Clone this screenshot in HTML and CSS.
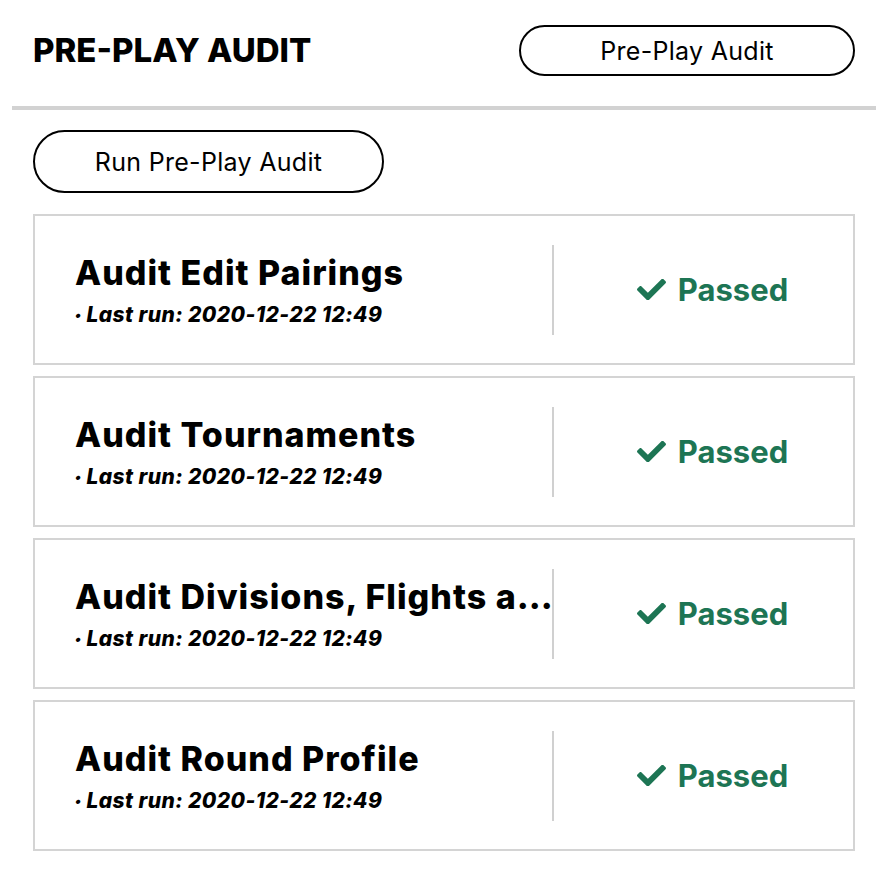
FILE: index.html
```html
<!DOCTYPE html>
<html>
<head>
<meta charset="utf-8">
<link rel="stylesheet" href="styles.css">
</head>
<body>
<div class="page">
  <header class="header">
    <h1 class="title">PRE-PLAY AUDIT</h1>
    <button class="pill pill-header">Pre-Play Audit</button>
  </header>
  <div class="content">
    <button class="pill pill-run">Run Pre-Play Audit</button>
    <div class="cards">
      <div class="card">
        <div class="info">
          <div class="card-title">Audit Edit Pairings</div>
          <div class="card-sub"><span class="dot">•</span> Last run: 2020-12-22 12:49</div>
        </div>
        <div class="sep"></div>
        <div class="status"><svg class="check" viewBox="0 0 512 370"><path d="M173.9 367.4l-166.4-166.4c-10-10-10-26.2 0-36.2l36.2-36.2c10-10 26.2-10 36.2 0L192 240.7 432.1 0.6c10-10 26.2-10 36.2 0l36.2 36.2c10 10 10 26.2 0 36.2l-294.4 294.4c-10 10-26.2 10-36.2 0z" transform="translate(0,2)"/></svg><span>Passed</span></div>
      </div>
      <div class="card">
        <div class="info">
          <div class="card-title">Audit Tournaments</div>
          <div class="card-sub"><span class="dot">•</span> Last run: 2020-12-22 12:49</div>
        </div>
        <div class="sep"></div>
        <div class="status"><svg class="check" viewBox="0 0 512 370"><path d="M173.9 367.4l-166.4-166.4c-10-10-10-26.2 0-36.2l36.2-36.2c10-10 26.2-10 36.2 0L192 240.7 432.1 0.6c10-10 26.2-10 36.2 0l36.2 36.2c10 10 10 26.2 0 36.2l-294.4 294.4c-10 10-26.2 10-36.2 0z" transform="translate(0,2)"/></svg><span>Passed</span></div>
      </div>
      <div class="card">
        <div class="info">
          <div class="card-title">Audit Divisions, Flights a<span class="ell">...</span></div>
          <div class="card-sub"><span class="dot">•</span> Last run: 2020-12-22 12:49</div>
        </div>
        <div class="sep"></div>
        <div class="status"><svg class="check" viewBox="0 0 512 370"><path d="M173.9 367.4l-166.4-166.4c-10-10-10-26.2 0-36.2l36.2-36.2c10-10 26.2-10 36.2 0L192 240.7 432.1 0.6c10-10 26.2-10 36.2 0l36.2 36.2c10 10 10 26.2 0 36.2l-294.4 294.4c-10 10-26.2 10-36.2 0z" transform="translate(0,2)"/></svg><span>Passed</span></div>
      </div>
      <div class="card">
        <div class="info">
          <div class="card-title">Audit Round Profile</div>
          <div class="card-sub"><span class="dot">•</span> Last run: 2020-12-22 12:49</div>
        </div>
        <div class="sep"></div>
        <div class="status"><svg class="check" viewBox="0 0 512 370"><path d="M173.9 367.4l-166.4-166.4c-10-10-10-26.2 0-36.2l36.2-36.2c10-10 26.2-10 36.2 0L192 240.7 432.1 0.6c10-10 26.2-10 36.2 0l36.2 36.2c10 10 10 26.2 0 36.2l-294.4 294.4c-10 10-26.2 10-36.2 0z" transform="translate(0,2)"/></svg><span>Passed</span></div>
      </div>
    </div>
  </div>
</div>
</body>
</html>
```

FILE: styles.css
```css
* { box-sizing: border-box; }
html, body { margin: 0; padding: 0; background: #fff; }
body { font-family: Inter, "Noto Sans", sans-serif; color: #000; }
.page { margin: 0 12px; }
.header {
  display: flex;
  justify-content: space-between;
  align-items: center;
  padding: 25px 21px 30px;
  border-bottom: 4px solid #d2d2d2;
}
.title {
  margin: 0;
  font-size: 33px;
  font-weight: 800;
  line-height: 1;
  letter-spacing: 0;
}
.pill {
  font-family: Inter, "Noto Sans", sans-serif;
  background: #fff;
  color: #000;
  border: 2px solid #000;
  border-radius: 999px;
  font-size: 25px;
  letter-spacing: 0.3px;
  padding: 0;
  display: flex;
  align-items: center;
  justify-content: center;
}
.pill-header { width: 336px; height: 51px; }
.pill-run { width: 351px; height: 63px; margin-top: 20px; }
.content { padding: 0 21px; }
.cards {
  display: flex;
  flex-direction: column;
  gap: 11px;
  margin-top: 21px;
}
.card {
  display: flex;
  align-items: center;
  height: 151px;
  border: 2px solid #d4d4d4;
}
.info {
  width: 517px;
  padding-left: 40px;
  padding-top: 1px;
  min-width: 0;
}
.card-title {
  font-size: 34px;
  font-weight: 800;
  line-height: 40px;
  white-space: nowrap;
  letter-spacing: 1px;
}
.ell { letter-spacing: 0; }
.card-sub {
  font-size: 21px;
  font-weight: 800;
  font-style: italic;
  line-height: 26px;
  margin-top: 9px;
  letter-spacing: 0.4px;
}
.dot { font-size: 14px; vertical-align: 2px; }
.sep {
  width: 2px;
  height: 90px;
  background: #d0d0d0;
  flex-shrink: 0;
}
.status {
  flex: 1;
  display: flex;
  align-items: center;
  justify-content: center;
  gap: 12px;
  color: #1d7554;
  font-size: 31px;
  font-weight: 700;
  padding-left: 18px;
}
.check { width: 29px; height: 21px; fill: #1d7554; }
```
